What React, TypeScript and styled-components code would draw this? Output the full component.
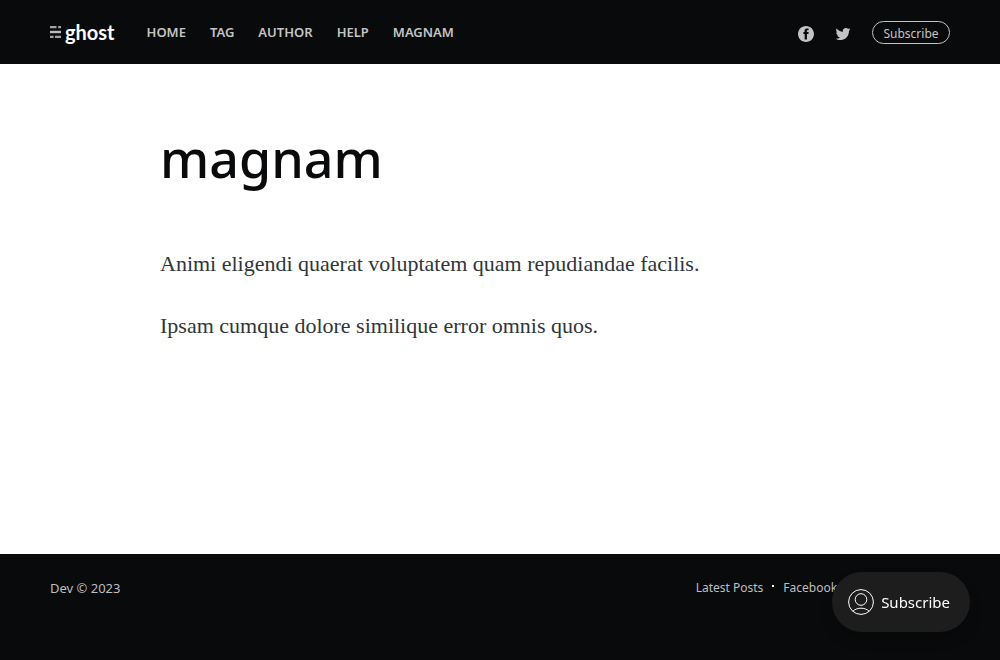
import React from "react";
import styled, { createGlobalStyle } from "styled-components";

const GlobalStyle = createGlobalStyle`
  *, *::before, *::after { box-sizing: border-box; }
  body {
    margin: 0;
    background: #fff;
    color: #353535;
    font-family: "Segoe UI", "Noto Sans", "Open Sans", sans-serif;
  }
  a { color: inherit; text-decoration: none; }
`;

const Page = styled.div`
  display: flex;
  flex-direction: column;
  min-height: 100vh;
`;

const Header = styled.header`
  display: flex;
  align-items: center;
  justify-content: space-between;
  height: 64px;
  padding: 0 50px;
  background: #090a0b;
  color: #c4c4c4;
`;

const HeaderSide = styled.div<{ $gap: number }>`
  display: flex;
  align-items: center;
  gap: ${({ $gap }) => $gap}px;
`;

const Logo = styled.a`
  display: flex;
  align-items: center;
  gap: 3px;
  color: #fff;
  font-family: Lato, sans-serif;
  font-size: 20px;
  font-weight: 700;
  line-height: 24px;
`;

const Nav = styled.nav`
  display: flex;
  gap: 24px;
`;

const NavLink = styled.a`
  font-size: 13px;
  font-weight: 600;
  line-height: 20px;
  text-transform: uppercase;
`;

const SocialLink = styled.a`
  display: flex;
  padding-top: 4px;
`;

const SubscribeButton = styled.button`
  min-width: 78px;
  margin-top: 1px;
  padding: 2px 10px 0;
  border: 1px solid #c4c4c4;
  border-radius: 12px;
  background: none;
  color: inherit;
  font-family: inherit;
  font-size: 12px;
  line-height: 19px;
`;

const Main = styled.main`
  flex: 1;
  width: 100%;
  max-width: 760px;
  margin: 0 auto;
  padding: 62px 40px;
`;

const Title = styled.h1`
  margin: 0 0 58px;
  color: #090a0b;
  font-size: 52px;
  font-weight: 500;
  line-height: 64px;
`;

const Paragraph = styled.p`
  margin: 0 0 30px;
  color: #2f363b;
  font-family: Georgia, "Liberation Serif", serif;
  font-size: 22px;
  line-height: 32px;
`;

const Footer = styled.footer`
  display: flex;
  align-items: flex-start;
  justify-content: space-between;
  min-height: 106px;
  padding: 24px 50px;
  background: #090a0b;
  color: #bdbfc0;
  font-size: 12px;
  line-height: 20px;
`;

const Copyright = styled.span`
  font-size: 13px;
`;

const FooterNav = styled.nav`
  display: flex;
  align-items: center;
`;

const FooterLink = styled.a`
  & + &::before {
    content: "";
    display: inline-block;
    width: 2px;
    height: 2px;
    margin: 0 9px 5px;
    background: #fff;
  }
`;

const PortalButton = styled.button`
  position: fixed;
  right: 30px;
  bottom: 28px;
  display: flex;
  align-items: center;
  gap: 7px;
  height: 60px;
  padding: 0 20px 0 16px;
  border: 0;
  border-radius: 30px;
  background: #1d1d1d;
  box-shadow: 0 8px 16px -4px rgba(0, 0, 0, 0.3);
  color: #fff;
  font-family: inherit;
  font-size: 15px;
  font-weight: 400;
  line-height: 24px;
`;

const LogoMark = () => (
  <svg width="12" height="12" viewBox="0 0 12 12" aria-hidden="true">
    <path fill="#a3a3a3" d="M0 0h6.500v2.200H0zM8.200 0h2.800v2.200H8.200zM0 9.800h3.600v2.200H0zM5 9.800h6v2.200H5z" />
    <path fill="#bdbdbd" d="M0 4.800h11v2.400H0z" />
  </svg>
);

const FacebookIcon = () => (
  <svg width="16" height="16" viewBox="0 0 32 32" fill="currentColor" aria-hidden="true">
    <path d="M16 0c8.837 0 16 7.163 16 16s-7.163 16-16 16S0 24.837 0 16 7.163 0 16 0zm5.204 4.911h-3.546c-2.103 0-4.443.885-4.443 3.934.01 1.062 0 2.08 0 3.225h-2.433v3.872h2.509v11.147h4.61v-11.22h3.042l.275-3.81h-3.397s.007-1.695 0-2.187c0-1.205 1.253-1.136 1.329-1.136.596 0 1.756.002 2.054 0V4.911z" />
  </svg>
);

const TwitterIcon = () => (
  <svg width="16" height="16" viewBox="1 1 30 30" fill="currentColor" aria-hidden="true">
    <path d="M30.063 7.313c-.813 1.125-1.75 2.125-2.875 2.938v.75c0 1.563-.188 3.125-.688 4.625a15.088 15.088 0 0 1-2.063 4.438c-.875 1.438-2 2.688-3.25 3.813a15.015 15.015 0 0 1-4.625 2.563c-1.813.688-3.75 1-5.75 1-3.25 0-6.188-.875-8.875-2.625.438.063.875.125 1.375.125 2.688 0 5.063-.875 7.188-2.5-1.25 0-2.375-.375-3.375-1.125s-1.688-1.688-2.063-2.875c.438.063.813.125 1.125.125.5 0 1-.063 1.5-.25-1.313-.25-2.438-.938-3.313-1.938a5.673 5.673 0 0 1-1.313-3.688v-.063c.813.438 1.688.688 2.625.688a5.228 5.228 0 0 1-1.875-2c-.5-.875-.688-1.813-.688-2.75 0-1.063.25-2.063.75-2.938 1.438 1.75 3.188 3.188 5.25 4.25s4.313 1.688 6.688 1.813a5.579 5.579 0 0 1 1.5-5.438c1.125-1.125 2.5-1.688 4.125-1.688s3.063.625 4.188 1.813a11.48 11.48 0 0 0 3.688-1.375c-.438 1.375-1.313 2.438-2.563 3.188 1.125-.125 2.188-.438 3.313-.875z" />
  </svg>
);

const MemberIcon = () => (
  <svg width="26" height="26" viewBox="0 0 26 26" fill="none" stroke="currentColor" strokeWidth="1" aria-hidden="true">
    <circle cx="13" cy="13" r="12.4" />
    <circle cx="13" cy="10.5" r="5.8" />
    <path d="M4.800 22.300C7 20.200 10 19.200 13 19.200s6 1 8.200 3.100" />
  </svg>
);

const navItems = ["Home", "Tag", "Author", "Help", "magnam"];
const footerItems = ["Latest Posts", "Facebook", "Twitter", "Ghost"];

export default function App() {
  return (
    <>
      <GlobalStyle />
      <Page>
        <Header>
          <HeaderSide $gap={32}>
            <Logo href="#">
              <LogoMark />
              ghost
            </Logo>
            <Nav>
              {navItems.map((item) => (
                <NavLink key={item} href="#">{item}</NavLink>
              ))}
            </Nav>
          </HeaderSide>
          <HeaderSide $gap={21}>
            <SocialLink href="#" aria-label="Facebook"><FacebookIcon /></SocialLink>
            <SocialLink href="#" aria-label="Twitter"><TwitterIcon /></SocialLink>
            <SubscribeButton type="button">Subscribe</SubscribeButton>
          </HeaderSide>
        </Header>
        <Main>
          <Title>magnam</Title>
          <Paragraph>Animi eligendi quaerat voluptatem quam repudiandae facilis.</Paragraph>
          <Paragraph>Ipsam cumque dolore similique error omnis quos.</Paragraph>
        </Main>
        <Footer>
          <Copyright>Dev © 2023</Copyright>
          <FooterNav>
            {footerItems.map((item) => (
              <FooterLink key={item} href="#">{item}</FooterLink>
            ))}
          </FooterNav>
        </Footer>
      </Page>
      <PortalButton type="button">
        <MemberIcon />
        Subscribe
      </PortalButton>
    </>
  );
}
